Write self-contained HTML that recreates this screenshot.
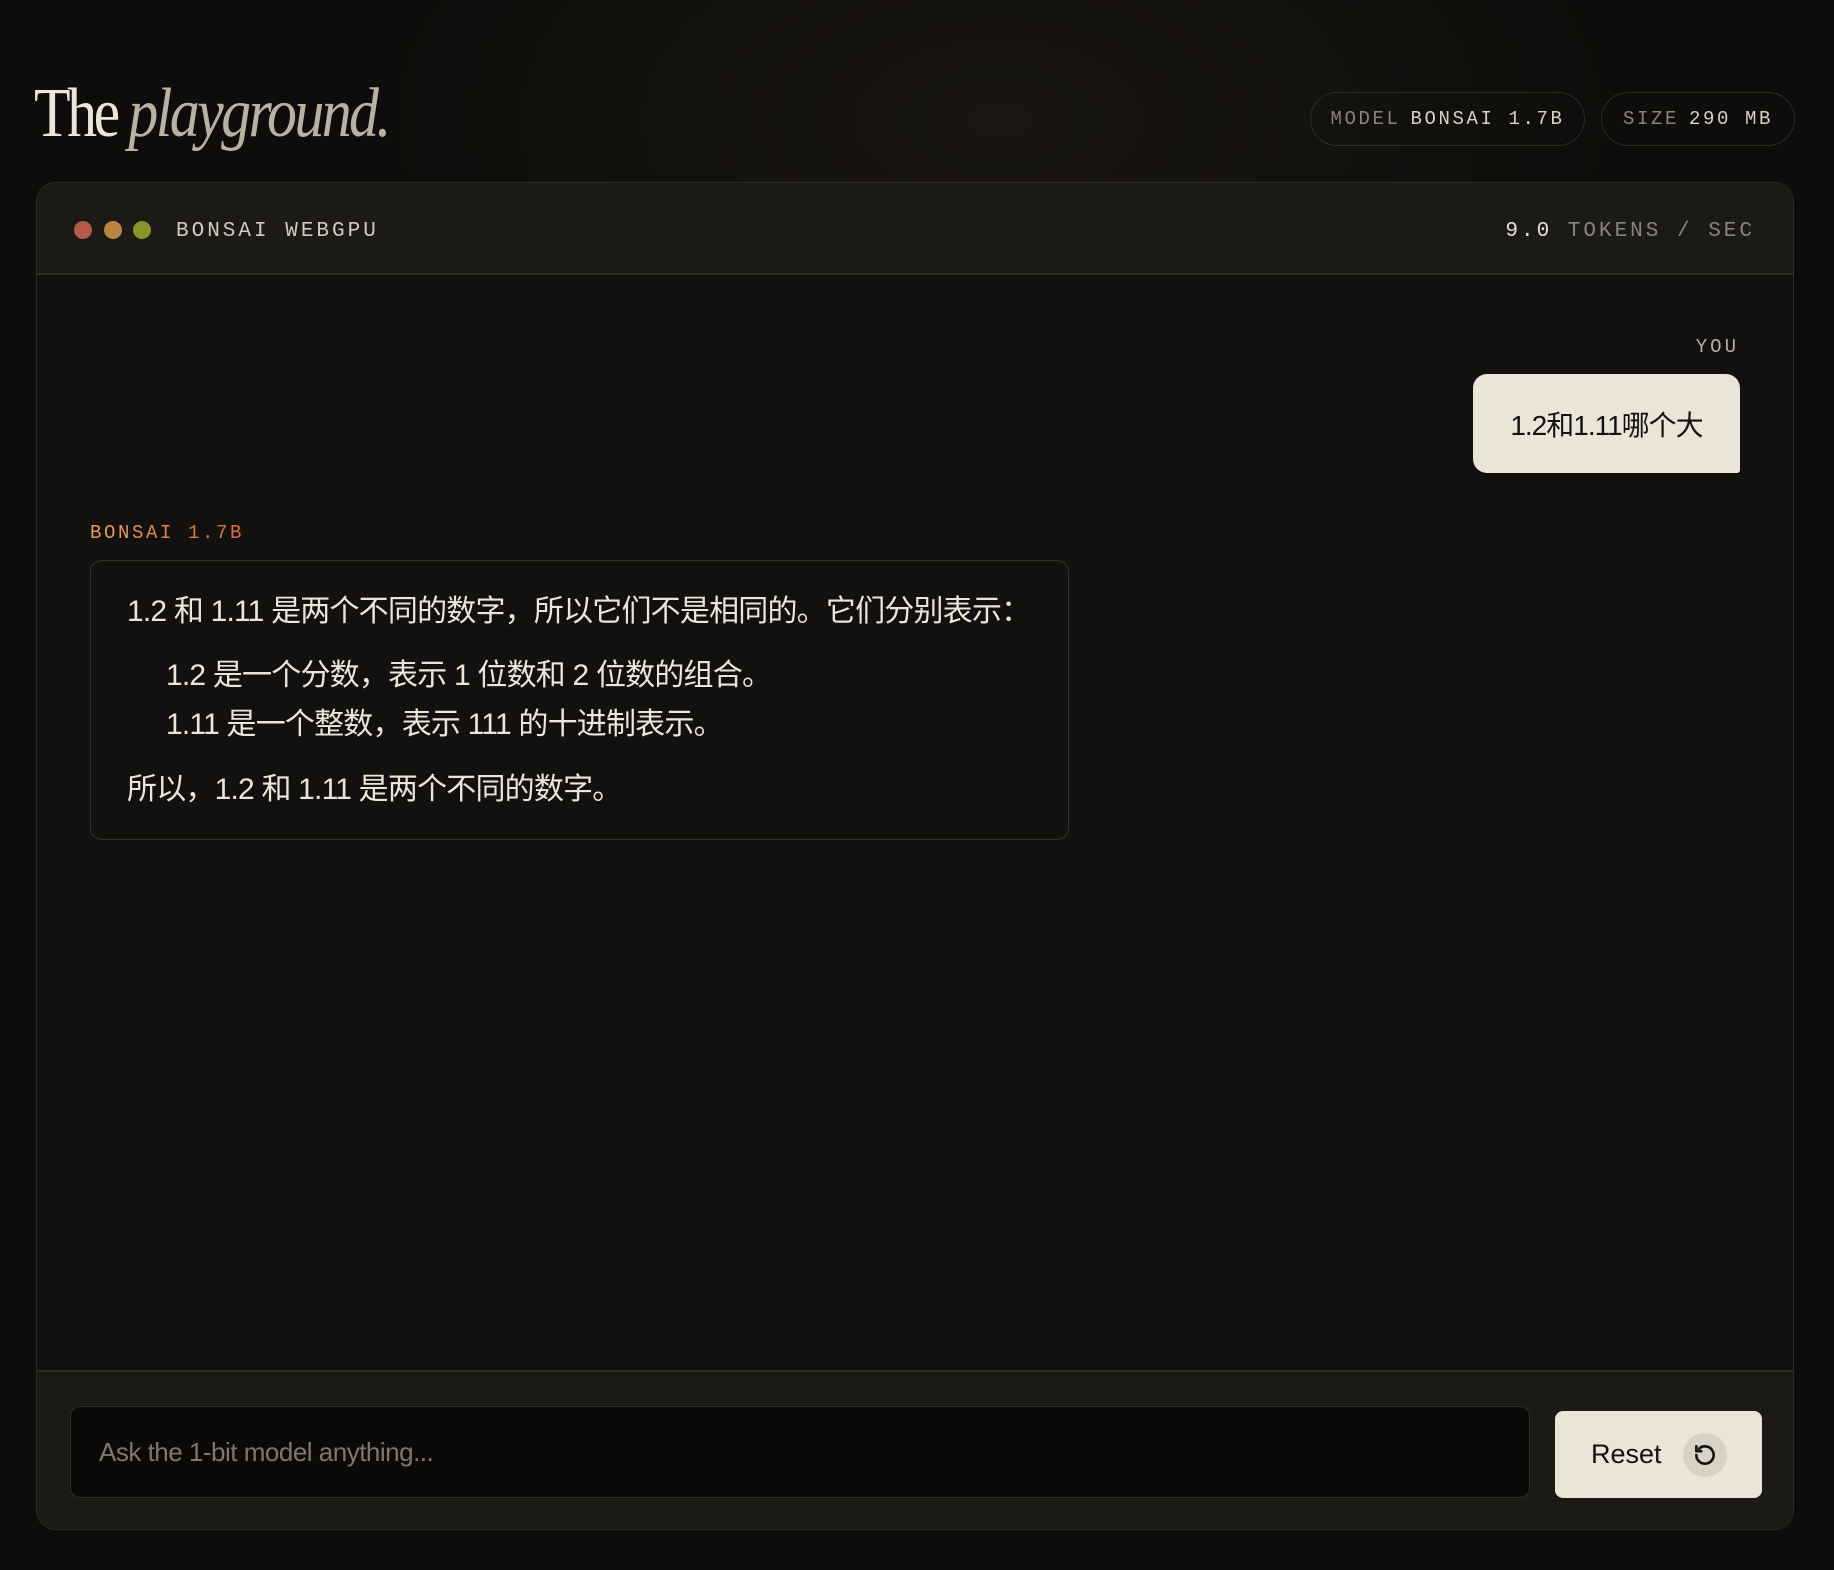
<!DOCTYPE html>
<html><head><meta charset="utf-8"><style>
*{box-sizing:border-box;margin:0;padding:0}
html,body{width:1834px;height:1570px;overflow:hidden}
body{background:radial-gradient(ellipse 900px 500px at 1000px 120px,#1a1712 0%,#0e0d0b 70%),#0d0c0b;font-family:"Liberation Sans","Noto Sans CJK SC",sans-serif;position:relative}
.mono{font-family:"Liberation Mono","DejaVu Sans Mono",monospace}
.title{position:absolute;left:34px;top:74px;font-family:"Liberation Serif","Noto Serif CJK SC",serif;font-size:70px;color:#ece6d8;letter-spacing:-4px;transform:scaleX(0.855);transform-origin:left;white-space:nowrap}
.title i{color:#b9b2a4;letter-spacing:-3px}
.pill{position:absolute;top:92px;height:54px;border:1.5px solid #2f2c26;border-radius:27px;font-size:19px;letter-spacing:2.6px;color:#8a857a;display:flex;align-items:center;justify-content:center}
.pill b{font-weight:normal;color:#d8d2c4;margin-left:10px}
.panel{position:absolute;left:36px;top:182px;width:1758px;height:1348px;border:1.5px solid #2c2a24;border-radius:20px;overflow:hidden;background:#121110}
.head{height:92px;background:#1b1a16;border-bottom:2px solid #2c2a24;position:relative}
.dot{position:absolute;top:38px;width:18px;height:18px;border-radius:50%}
.head .lbl{position:absolute;left:139px;top:37px;font-size:21px;letter-spacing:3px;color:#d2cbbd}
.head .tps{position:absolute;right:38px;top:37px;font-size:21px;letter-spacing:3px;color:#8a857a}
.head .tps b{font-weight:normal;color:#e6e0d2}
.you{position:absolute;right:54px;top:153px;font-size:19px;letter-spacing:3px;color:#b5afa2}
.ub{position:absolute;right:53px;top:191px;width:267px;height:99px;background:#ebe5d8;border-radius:14px 14px 3px 14px;color:#141210;font-size:28px;display:flex;align-items:center;justify-content:center;letter-spacing:-1px}
.bl{position:absolute;left:53px;top:339px;font-size:19px;letter-spacing:2.6px;background:linear-gradient(90deg,#e8a050,#e0683e);-webkit-background-clip:text;color:transparent}
.ab{position:absolute;left:53px;top:377px;width:979px;height:280px;border:1.5px solid #33312a;border-radius:12px;color:#ece6d8;font-size:30px}
.ab p{position:absolute;white-space:nowrap;letter-spacing:-0.8px}
.foot{position:absolute;left:0;top:1187px;width:100%;height:161px;background:#1b1a16;border-top:2px solid #2c2a24}
.inp{position:absolute;left:33px;top:34px;width:1460px;height:92px;background:#0b0a09;border:1.5px solid #2f2c26;border-radius:10px;color:#7e786d;font-size:26px;padding-left:28px;line-height:90px;letter-spacing:-0.5px}
.btn{position:absolute;left:1518px;top:39px;width:207px;height:87px;background:#ebe5d8;border-radius:8px;color:#141210;font-size:27px;display:flex;align-items:center;padding-left:36px}
.ic{position:absolute;right:35px;top:22px;width:44px;height:44px;border-radius:50%;background:#d8d2c5;display:flex;align-items:center;justify-content:center}
</style></head><body>
<div class="title">The <i>playground.</i></div>
<div class="pill mono" style="left:1310px;width:275px">MODEL<b>BONSAI 1.7B</b></div>
<div class="pill mono" style="left:1601px;width:194px">SIZE<b>290 MB</b></div>
<div class="panel">
 <div class="head">
  <div class="dot" style="left:37px;background:#b35a48"></div>
  <div class="dot" style="left:67px;background:#b9853e"></div>
  <div class="dot" style="left:96px;background:#869428"></div>
  <div class="lbl mono">BONSAI WEBGPU</div>
  <div class="tps mono"><b>9.0</b> TOKENS / SEC</div>
 </div>
 <div class="you mono">YOU</div>
 <div class="ub">1.2和1.11哪个大</div>
 <div class="bl mono">BONSAI 1.7B</div>
 <div class="ab">
  <p style="left:36px;top:25px">1.2 和 1.11 是两个不同的数字，所以它们不是相同的。它们分别表示：</p>
  <p style="left:75px;top:89px">1.2 是一个分数，表示 1 位数和 2 位数的组合。</p>
  <p style="left:75px;top:138px">1.11 是一个整数，表示 111 的十进制表示。</p>
  <p style="left:36px;top:203px">所以，1.2 和 1.11 是两个不同的数字。</p>
 </div>
 <div class="foot">
  <div class="inp">Ask the 1-bit model anything...</div>
  <div class="btn">Reset<div class="ic"><svg width="26" height="26" viewBox="0 0 24 24" fill="none" stroke="#141210" stroke-width="2.4" stroke-linecap="round" stroke-linejoin="round"><path d="M4 12a8 8 0 1 0 2.5-5.8"/><path d="M4 4v4.5h4.5"/></svg></div></div>
 </div>
</div>
</body></html>
